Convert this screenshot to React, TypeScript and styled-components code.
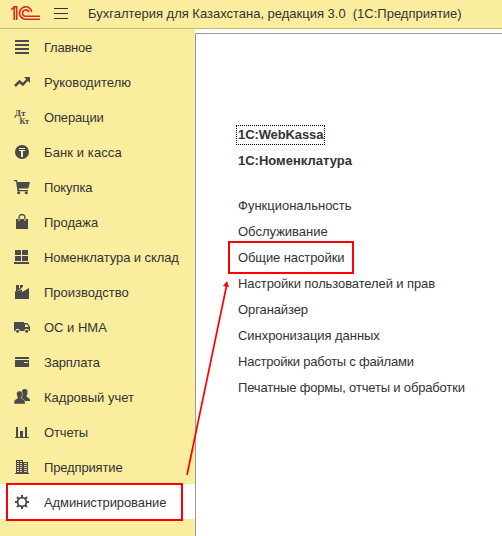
import React from "react";
import styled, { createGlobalStyle } from "styled-components";

const GlobalStyle = createGlobalStyle`
  * { box-sizing: border-box; }
  body { margin: 0; background: #fff; overflow: hidden; }
`;

const Window = styled.div`
  position: relative;
  width: 502px;
  height: 536px;
  display: flex;
  flex-direction: column;
  overflow: hidden;
  background: #fff;
  color: #333;
  font: 13px/16px "Liberation Sans", Arial, sans-serif;
  white-space: pre;
`;

const TitleBar = styled.header`
  flex: 0 0 29px;
  display: flex;
  align-items: flex-start;
  background: #fbed9e;
  border-bottom: 1px solid #c8b971;
`;

const Logo = styled.svg`
  width: 30px;
  height: 16px;
  margin: 5px 0 0 11px;
`;

const MenuButton = styled.button`
  display: flex;
  flex-direction: column;
  gap: 4px;
  width: 14px;
  margin: 8px 0 0 13px;
  padding: 0;
  border: 0;
  background: none;
`;

const MenuLine = styled.span`
  height: 1px;
  background: #333;
`;

const Title = styled.h1<{ $spacing: number }>`
  margin: 6px 0 0 20px;
  font-size: 13px;
  line-height: 16px;
  font-weight: 400;
  letter-spacing: ${(p) => p.$spacing}px;
`;

const Body = styled.div`
  flex: 1;
  display: flex;
  min-height: 0;
`;

const Sidebar = styled.nav`
  flex: 0 0 195px;
  background: #fbed9e;
`;

const SectionRow = styled.a<{ $active?: boolean }>`
  display: flex;
  align-items: center;
  height: 35px;
  padding: 2px 0 0 14px;
  background: ${(p) => (p.$active ? "#fff" : "transparent")};
`;

const Icon = styled.svg`
  flex: none;
  width: 16px;
  height: 16px;
  margin: -1px 14px 0 0;
  fill: #4a4a4a;
`;

const Label = styled.span<{ $spacing: number }>`
  letter-spacing: ${(p) => p.$spacing}px;
`;

const Content = styled.main`
  flex: 1;
  margin-top: 4px;
  padding: 93px 0 0 42px;
  border-top: 1px solid #999;
  border-left: 1px solid #999;
`;

const LinkGroup = styled.div<{ $bold?: boolean }>`
  display: flex;
  flex-direction: column;
  align-items: flex-start;
  gap: 10px;
  margin-bottom: 29px;
  font-weight: ${(p) => (p.$bold ? 700 : 400)};
`;

const Link = styled.a<{ $spacing: number; $focused?: boolean }>`
  letter-spacing: ${(p) => p.$spacing}px;
  outline: ${(p) => (p.$focused ? "1px dotted #000" : "none")};
  outline-offset: 1px;
`;

const Highlight = styled.div<{ $x: number; $y: number; $w: number; $h: number }>`
  position: absolute;
  left: ${(p) => p.$x}px;
  top: ${(p) => p.$y}px;
  width: ${(p) => p.$w}px;
  height: ${(p) => p.$h}px;
  border: 2px solid #f00;
`;

const Arrow = styled.svg`
  position: absolute;
  inset: 0;
  width: 502px;
  height: 536px;
  pointer-events: none;
`;

const PAPER = "#fbed9e";

const icons: Record<string, React.ReactNode> = {
  main: <path d="M1 1h14v2H1zM1 5h14v2H1zM1 9h14v2H1zM1 13h14v2H1z" />,
  manager: (
    <>
      <path d="M1 12l4.500-4.500 3.400 3L13.500 5.500" fill="none" stroke="#4a4a4a" strokeWidth="2.500" />
      <path d="M10 3h6v6z" />
    </>
  ),
  operations: (
    <g fontFamily="Liberation Serif, serif" fontWeight="700" fontSize="8">
      <text x="0.500" y="6.500" textLength="11" lengthAdjust="spacingAndGlyphs">Дт</text>
      <text x="5.500" y="15" textLength="9.500" lengthAdjust="spacingAndGlyphs">Кт</text>
    </g>
  ),
  bank: (
    <>
      <circle cx="8" cy="8" r="7" />
      <path d="M5 4h6v1H5zM5 6h6v1H9v6H7V7H5z" fill={PAPER} />
    </>
  ),
  purchase: (
    <>
      <path d="M0 1h3l.5 2H16l-1.700 6.500H4.800l.2 1.500H14v1.300H3.500L2 2.300H0z" />
      <circle cx="4.700" cy="13.800" r="1.500" />
      <circle cx="12.300" cy="13.800" r="1.500" />
    </>
  ),
  sale: (
    <>
      <path d="M2 5h12v10H2z" />
      <path d="M5 7V3.500a3 3 0 0 1 6 0V7" fill="none" stroke="#4a4a4a" strokeWidth="1.300" />
      <path d="M4.500 5h1v2h-1zM10.500 5h1v2h-1z" fill={PAPER} />
    </>
  ),
  stock: <path d="M1 1h6v5H1zM8 1h6v5H8zM1 7h6v5H1zM8 7h6v5H8zM0 13h15v2H0z" />,
  production: <path d="M1 15V8l1-1.500V1h3v3.500L6 4V1h3v1.500L6 5.500 2.500 7.500 8 5.500V8l7-4v11z" />,
  assets: (
    <>
      <path d="M0 3h10v1h3.500L16 8v4H0z" />
      <path d="M11 5.500h2L14.500 8H11z" fill={PAPER} />
      <circle cx="3.600" cy="12" r="2.200" fill={PAPER} />
      <circle cx="12.600" cy="12" r="2.200" fill={PAPER} />
      <circle cx="3.600" cy="12.200" r="1.500" />
      <circle cx="12.600" cy="12.200" r="1.500" />
    </>
  ),
  salary: <path fillRule="evenodd" d="M1 3.500q0-.5.500-.5h13q.5 0 .5.500V5H1zM1 6h14v6.500q0 .5-.5.500h-13Q1 13 1 12.500zM10 8v1h4V8z" />,
  staff: (
    <>
      <path d="M8 4C7.500 1.500 8.500 0 10.700 0s3.300 1.500 2.800 4c-.2 1.500-.8 2.500-1 3.200.3 1.500 3.500 1 3.500 4.300V12H8z" />
      <path d="M2.600 5.700C2.200 3.300 3.300 2 5.500 2s3.300 1.300 2.900 3.700c-.2 1.300-.7 2.200-1.100 2.800.2 2 3.900 1 3.900 5.500v1H0v-1c0-4.500 3.500-3.500 3.700-5.500-.4-.6-.9-1.500-1.100-2.800z" stroke={PAPER} strokeWidth="0.500" />
    </>
  ),
  reports: <path d="M1 13h14v1H1zM2 3h2v10H2zM6 7h3v6H6zM11 3h2v10h-2z" />,
  company: (
    <>
      <path d="M2 1h7v13H2zM9 3h5v11H9zM1 14h14v1H1z" />
      <path d="M3 2.500h2M6 2.500h2M3 4.500h2M6 4.500h2M3 6.500h2M6 6.500h2M3 8.500h2M6 8.500h2M3 10.500h2M6 10.500h2M3 12.500h2M6 12.500h2M10 4.500h3M10 6.500h3M10 8.500h3M10 10.500h3M10 12.500h3" stroke={PAPER} strokeWidth="0.900" />
    </>
  ),
  admin: (
    <g fill="none" stroke="#4a4a4a">
      <circle cx="8" cy="8" r="4.400" strokeWidth="1.800" />
      <path d="M8 1v2.500M8 12.500V15M1 8h2.500M12.500 8H15M3 3l2 2M11 11l2 2M3 13l2-2M11 5l2-2" strokeWidth="2" />
    </g>
  ),
};

const sections = [
  { icon: "main", text: "Главное", spacing: -0.25 },
  { icon: "manager", text: "Руководителю", spacing: 0.03 },
  { icon: "operations", text: "Операции", spacing: -0.15 },
  { icon: "bank", text: "Банк и касса", spacing: 0.1 },
  { icon: "purchase", text: "Покупка", spacing: -0.1 },
  { icon: "sale", text: "Продажа", spacing: 0 },
  { icon: "stock", text: "Номенклатура и склад", spacing: -0.08 },
  { icon: "production", text: "Производство", spacing: 0 },
  { icon: "assets", text: "ОС и НМА", spacing: 0 },
  { icon: "salary", text: "Зарплата", spacing: -0.15 },
  { icon: "staff", text: "Кадровый учет", spacing: 0 },
  { icon: "reports", text: "Отчеты", spacing: -0.15 },
  { icon: "company", text: "Предприятие", spacing: -0.15 },
  { icon: "admin", text: "Администрирование", spacing: -0.1, active: true },
];

const products = [
  { text: "1С:WebKassa", spacing: -0.1, focused: true },
  { text: "1С:Номенклатура", spacing: 0 },
];

const settings = [
  { text: "Функциональность", spacing: 0 },
  { text: "Обслуживание", spacing: 0 },
  { text: "Общие настройки", spacing: -0.1 },
  { text: "Настройки пользователей и прав", spacing: -0.1 },
  { text: "Органайзер", spacing: -0.1 },
  { text: "Синхронизация данных", spacing: -0.05 },
  { text: "Настройки работы с файлами", spacing: -0.22 },
  { text: "Печатные формы, отчеты и обработки", spacing: -0.17 },
];

export default function App() {
  return (
    <Window>
      <GlobalStyle />
      <TitleBar>
        <Logo viewBox="0 0 30 16" fill="none" stroke="#dc2722" strokeWidth="1.600">
          <path d="M.3 4.500L3.200 2.200V15M2.500 1.800h3.200V15" />
          <path d="M20.800 7A6.200 6.200 0 1 0 14.500 14.200H29M17.800 7.300A3.200 3.200 0 1 0 14.500 11.300H29" />
        </Logo>
        <MenuButton aria-label="Меню">
          <MenuLine />
          <MenuLine />
          <MenuLine />
        </MenuButton>
        <Title $spacing={-0.01}>Бухгалтерия для Казахстана, редакция 3.0  (1С:Предприятие)</Title>
      </TitleBar>
      <Body>
        <Sidebar>
          {sections.map((s) => (
            <SectionRow key={s.icon} $active={s.active}>
              <Icon viewBox="0 0 16 16">{icons[s.icon]}</Icon>
              <Label $spacing={s.spacing}>{s.text}</Label>
            </SectionRow>
          ))}
        </Sidebar>
        <Content>
          <LinkGroup $bold>
            {products.map((l) => (
              <Link key={l.text} $spacing={l.spacing} $focused={l.focused}>{l.text}</Link>
            ))}
          </LinkGroup>
          <LinkGroup>
            {settings.map((l) => (
              <Link key={l.text} $spacing={l.spacing}>{l.text}</Link>
            ))}
          </LinkGroup>
        </Content>
      </Body>
      <Highlight $x={6} $y={483} $w={177} $h={38} />
      <Highlight $x={228} $y={241} $w={126} $h={33} />
      <Arrow viewBox="0 0 502 536">
        <path d="M187 475L226.500 286" stroke="#f00" strokeWidth="1.700" />
        <path d="M227 281l2 6-6-1z" fill="#f00" />
      </Arrow>
    </Window>
  );
}
